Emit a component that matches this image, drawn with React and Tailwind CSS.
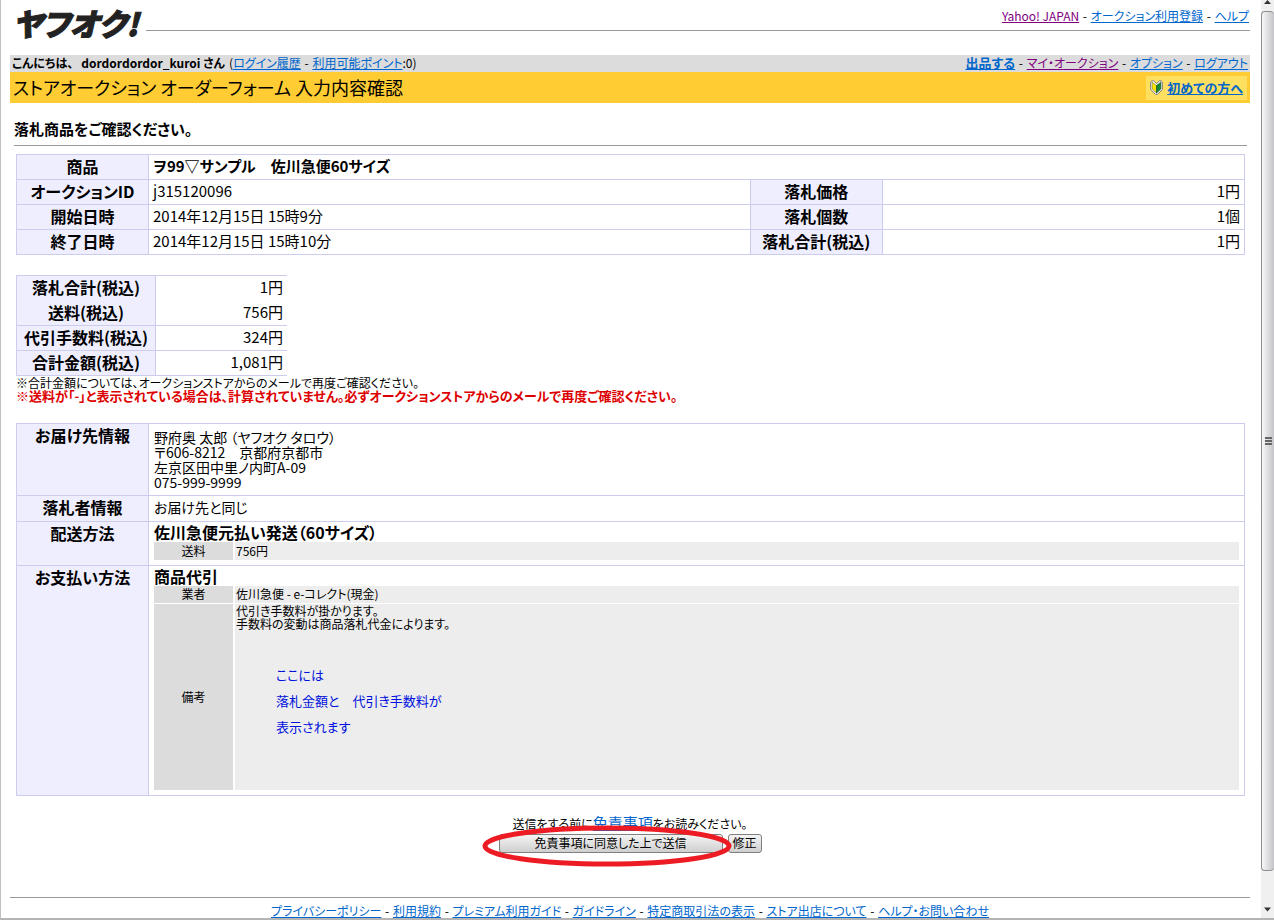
// src/pages/OrderConfirmPage.jsx
import React from 'react';

const footerLinks = [
  'プライバシーポリシー',
  '利用規約',
  'プレミアム利用ガイド',
  'ガイドライン',
  '特定商取引法の表示',
  'ストア出店について',
  'ヘルプ・お問い合わせ',
];

const auctionRows = [
  { label: 'オークションID', value: 'j315120096', label2: '落札価格', value2: '1円' },
  { label: '開始日時', value: '2014年12月15日 15時9分', label2: '落札個数', value2: '1個' },
  { label: '終了日時', value: '2014年12月15日 15時10分', label2: '落札合計(税込)', value2: '1円' },
];

// The first two totals share one box, so only some rows carry a rule below
const totals = [
  { label: '落札合計(税込)', value: '1円', rule: false },
  { label: '送料(税込)', value: '756円', rule: true },
  { label: '代引手数料(税込)', value: '324円', rule: true },
  { label: '合計金額(税込)', value: '1,081円', rule: true },
];

function TextLink({ children, visited, className = '' }) {
  const color = visited ? 'text-[#800080]' : 'text-[#0066cc]';
  return (
    <a href="#" className={`underline ${color} ${className}`}>
      {children}
    </a>
  );
}

// Separator between text links
function Dash() {
  return <span className="px-px"> - </span>;
}

function BeginnerMark() {
  return (
    <svg width="13" height="15" viewBox="0 0 13 15" aria-hidden="true">
      <path d="M2 .8H3.500L6.500 3.500 9.500.8H11L12.300 2V9.500L7.500 14.300H5.500L.7 9.500V2Z" fill="#fff" stroke="#777" />
      <path d="M2.200 2.200 6.500 5.500V13L2.200 9Z" fill="#ffe800" stroke="#786f20" strokeWidth=".6" />
      <path d="M10.800 2.200 6.500 5.500V13L10.800 9Z" fill="#158a36" stroke="#0a3f18" strokeWidth=".6" />
    </svg>
  );
}

function PageHeader() {
  return (
    <header>
      <div className="flex h-[55px] pt-[3px] pl-[3px]">
        <h1 className="w-[133px] text-[31px] leading-[40px] font-black whitespace-nowrap text-[#222222] italic [-webkit-text-stroke:1px_#222222]">
          ヤフオク!
        </h1>
        <div className="flex-1">
          <nav className="h-7 border-b border-[#999999] pt-[5px] pr-px text-right text-[12px] leading-4">
            <TextLink visited>Yahoo! JAPAN</TextLink>
            <Dash />
            <TextLink>オークション利用登録</TextLink>
            <Dash />
            <TextLink>ヘルプ</TextLink>
          </nav>
        </div>
      </div>
      <div className="flex h-[17px] justify-between bg-[#dcdcdc] px-[2px] text-[12px] leading-4">
        <p className="flex">
          <b className="mr-2">こんにちは、</b>
          <b className="mr-1">dordordordor_kuroi さん</b>
          <span>
            (<TextLink>ログイン履歴</TextLink>
            <Dash />
            <TextLink>利用可能ポイント</TextLink>:0)
          </span>
        </p>
        <nav>
          <TextLink className="text-[13px] font-bold">出品する</TextLink>
          <Dash />
          <TextLink visited>マイ・オークション</TextLink>
          <Dash />
          <TextLink>オプション</TextLink>
          <Dash />
          <TextLink>ログアウト</TextLink>
        </nav>
      </div>
      <div className="flex h-[31px] items-center justify-between bg-[#ffcc33] pr-[3px] pl-[3px]">
        <h2 className="pb-[2px] text-[18px] leading-7">ストアオークション オーダーフォーム 入力内容確認</h2>
        <div className="flex h-6 items-center gap-1 bg-[#ffdf5f] px-1 text-[13px] font-bold">
          <BeginnerMark />
          <TextLink>初めての方へ</TextLink>
        </div>
      </div>
    </header>
  );
}

function AuctionTable() {
  const th = 'border border-[#ccccee] bg-[#eeeeff] pb-[2px] text-[16px]';
  const td = 'border border-[#ccccee] px-1 pb-[2px]';

  return (
    <table className="mt-2 w-full table-fixed border-collapse text-[15px] leading-[22px]">
      <colgroup>
        <col className="w-[132px]" />
        <col className="w-[49%]" />
        <col className="w-[132px]" />
        <col />
      </colgroup>
      <tbody>
        <tr>
          <th className={th}>商品</th>
          <td colSpan={3} className={`font-bold ${td}`}>
            ヲ99▽サンプル　佐川急便60サイズ
          </td>
        </tr>
        {auctionRows.map((row) => (
          <tr key={row.label}>
            <th className={th}>{row.label}</th>
            <td className={td}>{row.value}</td>
            <th className={th}>{row.label2}</th>
            <td className={`text-right ${td}`}>{row.value2}</td>
          </tr>
        ))}
      </tbody>
    </table>
  );
}

function TotalsTable() {
  return (
    <table className="mt-5 w-[271px] table-fixed border-collapse border-t border-[#ccccee] text-[15px] leading-[22px]">
      <tbody>
        {totals.map((row) => (
          <tr key={row.label} className={row.rule ? 'h-[25px] border-b border-[#ccccee]' : 'h-[25px]'}>
            <th className="w-[139px] border-x border-[#ccccee] bg-[#eeeeff] pb-[2px] text-[16px] whitespace-nowrap">
              {row.label}
            </th>
            <td className="px-1 pb-[2px] text-right">{row.value}</td>
          </tr>
        ))}
      </tbody>
    </table>
  );
}

function DeliveryTable() {
  const th = 'border border-[#ccccee] bg-[#eeeeff] align-top text-[16px] leading-[22px]';
  const td = 'border border-[#ccccee] pl-[5px] pr-[5px] align-top';
  const method = 'text-[16px] leading-5 font-bold';
  const subTh = 'border-r-2 border-white bg-[#dcdcdc] font-normal';

  return (
    <table className="mt-[21px] w-full table-fixed border-collapse">
      <colgroup>
        <col className="w-[132px]" />
        <col />
      </colgroup>
      <tbody>
        <tr className="h-[72px]">
          <th className={th}>お届け先情報</th>
          <td className={td}>
            <address className="pt-[6px] text-[14px] leading-[15px] not-italic">
              野府奥 太郎 （ヤフオク タロウ）
              <br />
              〒606-8212　京都府京都市
              <br />
              左京区田中里ノ内町A-09
              <br />
              075-999-9999
            </address>
          </td>
        </tr>
        <tr className="h-[26px]">
          <th className={th}>落札者情報</th>
          <td className={`text-[14px] leading-[22px] ${td}`}>お届け先と同じ</td>
        </tr>
        <tr className="h-[44px]">
          <th className={th}>配送方法</th>
          <td className={td}>
            <p className={method}>佐川急便元払い発送（60サイズ）</p>
            <table className="w-full table-fixed border-collapse text-[12px] leading-4">
              <tbody>
                <tr className="h-[18px]">
                  <th className={`w-20 ${subTh}`}>送料</th>
                  <td className="bg-[#ededed] px-px">756円</td>
                </tr>
              </tbody>
            </table>
          </td>
        </tr>
        <tr className="h-[230px]">
          <th className={th}>お支払い方法</th>
          <td className={td}>
            <p className={method}>商品代引</p>
            <table className="w-full table-fixed border-collapse text-[12px] leading-4">
              <tbody>
                <tr className="h-[17px] border-b border-white">
                  <th className={`w-20 ${subTh}`}>業者</th>
                  <td className="bg-[#ededed] px-px">佐川急便 - e-コレクト(現金)</td>
                </tr>
                <tr className="h-[187px]">
                  <th className={subTh}>備考</th>
                  <td className="bg-[#ededed] px-px align-top">
                    <p className="leading-[13px]">
                      代引き手数料が掛かります。
                      <br />
                      手数料の変動は商品落札代金によります。
                    </p>
                    <p className="pt-8 pl-10 text-[13px] leading-[26px] text-[#0011dd]">
                      ここには
                      <br />
                      落札金額と　代引き手数料が
                      <br />
                      表示されます
                    </p>
                  </td>
                </tr>
              </tbody>
            </table>
          </td>
        </tr>
      </tbody>
    </table>
  );
}

function SubmitArea() {
  const button =
    'h-[19px] rounded-[3px] border border-[#808080] bg-linear-to-b from-[#f4f4f4] to-[#cfcfcf] pb-[2px] leading-4';
  return (
    <form className="mt-[18px] text-center text-[12px]" onSubmit={(e) => e.preventDefault()}>
      <p className="h-5 leading-[18px]">
        送信をする前に<TextLink className="text-[15px]">免責事項</TextLink>をお読みください。
      </p>
      <div className="flex justify-center gap-[5px]">
        <div className="relative">
          <button type="submit" className={`w-[224px] ${button}`}>
            免責事項に同意した上で送信
          </button>
          {/* Hand-drawn ring around the submit button */}
          <svg className="pointer-events-none absolute -top-[9px] -left-[17px]" width="250" height="42" viewBox="0 0 250 42">
            <ellipse cx="125" cy="21" rx="122" ry="18" fill="none" stroke="#ed1c24" strokeWidth="5" />
          </svg>
        </div>
        <button type="button" className={`w-[34px] ${button}`}>
          修正
        </button>
      </div>
    </form>
  );
}

function PageFooter() {
  return (
    <footer className="mt-11 border-t border-[#999999] pt-[6px] text-center text-[12px] leading-[14px]">
      {footerLinks.map((label, i) => (
        <React.Fragment key={label}>
          {i > 0 && <Dash />}
          <TextLink>{label}</TextLink>
        </React.Fragment>
      ))}
    </footer>
  );
}

function ScrollBar() {
  return (
    <div className="flex w-[13px] shrink-0 flex-col bg-[#f0f0f0]" aria-hidden="true">
      <div className="flex h-[11px] justify-center">
        <svg width="9" height="5" viewBox="0 0 9 5">
          <path d="M4.500 0 8 4H1Z" fill="#333" />
        </svg>
      </div>
      <div className="flex flex-1 flex-col items-center justify-center gap-px rounded-sm border border-r-0 border-[#8e8e8e] bg-linear-to-r from-[#f8f8f8] to-[#c4c4c9]">
        <span className="h-[2px] w-[7px] bg-[#666666]" />
        <span className="h-[2px] w-[7px] bg-[#666666]" />
        <span className="h-[2px] w-[7px] bg-[#666666]" />
      </div>
      <div className="flex h-[47px] items-end justify-center pb-[6px]">
        <svg width="9" height="5" viewBox="0 0 9 5">
          <path d="M4.500 4.500 8 .5H1Z" fill="#333" />
        </svg>
      </div>
    </div>
  );
}

export default function App() {
  return (
    <div className="flex min-h-screen border-b-2 border-l border-b-[#b4b4b4] border-l-[#c0c0c0] bg-white font-['Noto_Sans_CJK_JP',sans-serif] text-black [font-feature-settings:'palt']">
      <div className="min-w-0 flex-1 pr-[11px] pl-[9px]">
        <PageHeader />
        <main>
          <h3 className="mr-[3px] ml-1 border-b border-[#999999] pt-[14px] pb-1 text-[15px] leading-6 font-bold">
            落札商品をご確認ください。
          </h3>
          <div className="pr-[5px] pl-[6px]">
            <AuctionTable />
            <TotalsTable />
            <div className="text-[12px] leading-[13px]">
              <p>※合計金額については、オークションストアからのメールで再度ご確認ください。</p>
              <p className="text-[13px] font-bold text-[#dd0000]">
                ※送料が「-」と表示されている場合は、計算されていません。必ずオークションストアからのメールで再度ご確認ください。
              </p>
            </div>
            <DeliveryTable />
          </div>
          <SubmitArea />
        </main>
        <PageFooter />
      </div>
      <ScrollBar />
    </div>
  );
}
